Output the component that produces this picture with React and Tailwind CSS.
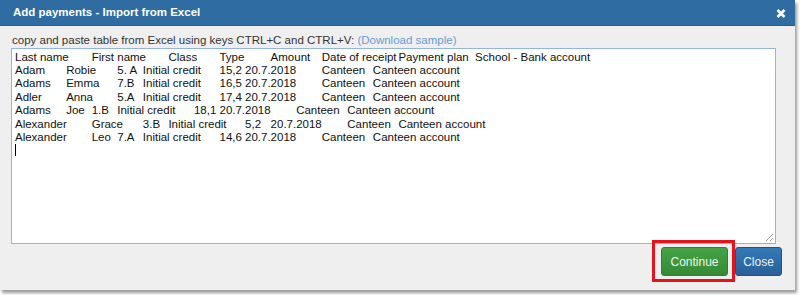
import React from "react";

const rows = [
  "Last name\tFirst name\tClass\tType\tAmount\tDate of receipt\tPayment plan\tSchool - Bank account",
  "Adam\tRobie\t5. A\tInitial credit\t15,2\t20.7.2018\tCanteen\tCanteen account",
  "Adams\tEmma\t7.B\tInitial credit\t16,5\t20.7.2018\tCanteen\tCanteen account",
  "Adler\tAnna\t5.A\tInitial credit\t17,4\t20.7.2018\tCanteen\tCanteen account",
  "Adams\tJoe\t1.B\tInitial credit\t18,1\t20.7.2018\tCanteen\tCanteen account",
  "Alexander\tGrace\t3.B\tInitial credit\t5,2\t20.7.2018\tCanteen\tCanteen account",
  "Alexander\tLeo\t7.A\tInitial credit\t14,6\t20.7.2018\tCanteen\tCanteen account",
];

export default function App() {
  return (
    <div className="w-[800px] h-[295px] bg-white font-['Liberation_Sans',Arial,sans-serif] overflow-hidden">
      <div className="w-[795px] h-[290px] bg-[#efefef] flex flex-col shadow-[2px_3px_3px_rgba(0,0,0,0.4)]">
        {/* title bar */}
        <div className="h-[26px] shrink-0 bg-[#2e6ca2] border-b border-[#275d8c] flex items-center justify-between pl-[13px] pr-[9px]">
          <span className="text-white font-bold text-[11.5px] leading-none">
            Add payments - Import from Excel
          </span>
          <svg width="10" height="9" viewBox="0 0 10 9" className="mt-[1px]">
            <path d="M1.5 1 L8.5 8 M8.5 1 L1.5 8" stroke="#fff" strokeWidth="2.6" strokeLinecap="butt" />
          </svg>
        </div>

        <div className="flex-1 flex flex-col pt-[7px] pl-[11px] pr-[13px] pb-[14px]">
          <p className="text-[11.5px] leading-[14px] text-[#333] pl-px">
            copy and paste table from Excel using keys CTRL+C and CTRL+V:{" "}
            <a className="text-[#6b9bd0]">(Download sample)</a>
          </p>

          {/* pasted data area */}
          <div className="relative mt-px w-[765px] h-[196px] bg-white border border-[#93b4ea] pl-[3px] pt-[1.5px] text-[11.5px] leading-[13.4px] text-[#111] whitespace-pre [tab-size:8]">
            {rows.map((r, i) => (
              <div key={i}>{r}</div>
            ))}
            <div className="h-[13.4px]">
              <span className="inline-block w-px h-[12px] bg-black align-[-2px]" />
            </div>
            <svg width="10" height="10" viewBox="0 0 10 10" className="absolute right-[1px] bottom-[1px]">
              <path d="M9 2 L2 9 M9 6 L6 9" stroke="#9a9a9a" strokeWidth="1" />
            </svg>
          </div>

          <div className="mt-[3px] flex justify-end items-center">
            <div className="relative">
              <button className="w-[67px] h-[29px] rounded-[3px] border border-[#317f31] bg-gradient-to-b from-[#45a345] to-[#358b35] text-[#eef2ee] text-[12px]">
                Continue
              </button>
              <div className="absolute left-[-9px] top-[-7px] right-[-7px] bottom-[-6px] border-[3px] border-[#e5131b] pointer-events-none" />
            </div>
            <button className="ml-[7px] w-[47px] h-[29px] rounded-[3px] border border-[#245580] bg-gradient-to-b from-[#3479b6] to-[#28609a] text-[#eef2f6] text-[12px]">
              Close
            </button>
          </div>
        </div>
      </div>
    </div>
  );
}
